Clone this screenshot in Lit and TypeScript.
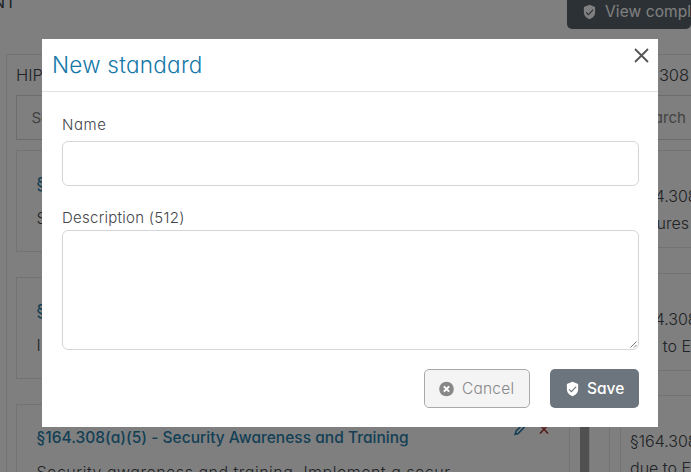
import { LitElement, html, css, svg } from "lit";
import { customElement, property } from "lit/decorators.js";

const shield = svg`<path d="M8 .3 14 2.700v5.600c0 3.600-2.600 6.200-6 7.400-3.400-1.200-6-3.800-6-7.400V2.700z" fill="currentColor"/><path class="tick" d="M4.300 8.300 6.900 10.800 11.900 5.400" fill="none"/>`;

@customElement("standard-card")
class StandardCard extends LitElement {
  @property() heading = "";
  @property({ type: Array }) lines: string[] = [];
  @property({ type: Boolean }) actions = false;

  static styles = css`
    :host { display: block; box-sizing: border-box; border: 1px solid #e6e6e6; padding: 17px 10px 0 19.500px; white-space: nowrap; overflow: hidden; }
    :host([plain]) { padding: 32px 0 0 9px; }
    .top { display: flex; justify-content: space-between; height: 31px; line-height: 31px; }
    .heading { font-weight: 500; font-size: 15.5px; color: #287fab; letter-spacing: 0.02px; }
    .icons { display: flex; gap: 12px; margin-right: 9px; }
    .icons svg { width: 12px; height: 14px; }
    .line { line-height: 27px; height: 27.300px; font-weight: 300; font-size: 16px; letter-spacing: 0.5px; }
    :host(:not([plain])) .line { margin-top: 6px; }
    :host([plain]) .line { letter-spacing: 0; }
  `;

  render() {
    return html`
      ${this.heading
        ? html`<div class="top">
            <span class="heading">${this.heading}</span>
            ${this.actions
              ? html`<span class="icons">
                  <svg viewBox="0 0 12 14"><path d="M1.200 12.300 2 9.200 8.800 2.300 11 4.400 4.200 11.500z" fill="none" stroke="#287fab" stroke-width="1.600"/></svg>
                  <svg viewBox="0 0 12 14"><path d="M2 3 10 11.500M10 3 2 11.500" stroke="#a83232" stroke-width="1.500"/></svg>
                </span>`
              : ""}
          </div>`
        : ""}
      ${this.lines.map((l) => html`<div class="line">${l}</div>`)}
    `;
  }
}

@customElement("app-root")
class AppRoot extends LitElement {
  static styles = css`
    * { box-sizing: border-box; }
    :host { display: block; position: relative; width: 691px; height: 472px; overflow: hidden; background: #fff; color: #42464b; font-family: Inter, "Open Sans", sans-serif; font-feature-settings: "cv11"; }
    .page { height: 472px; overflow: hidden; display: flex; flex-direction: column; white-space: nowrap; }
    .bar { height: 54px; flex: none; display: flex; justify-content: space-between; overflow: hidden; }
    .tenant { font-size: 16px; line-height: 20px; margin: -8px 0 0 -7px; letter-spacing: .5px; }
    .view { width: 124px; height: 34px; margin-top: -5px; padding: 0 0 1px 15px; border-radius: 5px; background: #57626b; color: #fff; display: flex; align-items: center; gap: 8px; font-size: 15.5px; letter-spacing: .1px; flex: none; }
    .icon { width: 15px; height: 16px; flex: none; }
    .tick { stroke: #57626b; stroke-width: 1.200; }
    .columns { display: flex; flex: 1; padding-left: 6px; }
    .column { flex: none; border: 1px solid #e6e6e6; border-bottom: 0; padding: 0 9px; display: flex; flex-direction: column; height: 418px; }
    .left { width: 584px; margin-right: 19px; }
    .right { width: 584px; padding-left: 10px; }
    .name { height: 40px; flex: none; line-height: 40px; font-size: 16.500px; font-weight: 350; }
    .right .name { letter-spacing: -.1px; }
    .search { height: 45px; flex: none; border: 1px solid #d9d9d9; padding-left: 14.500px; line-height: 43px; font-size: 15px; color: #858585; }
    .list { flex: 1; margin-top: 10px; display: flex; min-height: 0; overflow: hidden; }
    .cards { width: 554px; flex: none; display: flex; flex-direction: column; gap: 25px; }
    .cards standard-card { height: 102px; flex: none; }
    .right .cards { gap: 24.500px; }
    .right .cards standard-card { height: 98px; }
    .thumb { width: 9px; margin: 220px 0 0 10px; background: #a0a0a0; flex: none; }
    .left .list { margin-right: -10px; }
    .backdrop { position: absolute; inset: 0; background: rgba(0, 0, 0, .5); display: flex; padding: 38.500px 32.700px 45px 42.300px; }
    .dialog { flex: 1; background: #fff; display: flex; flex-direction: column; }
    .head { height: 53.500px; flex: none; border-bottom: 1px solid #dfe1e3; display: flex; justify-content: space-between; padding: 0 9.500px 0 9.700px; }
    .title { font-size: 22.500px; line-height: 51px; font-weight: 300; color: #1478a8; letter-spacing: .25px; }
    .close { width: 15px; height: 15px; margin-top: 9.500px; }
    .form { padding: 0 19.300px 0 19.700px; display: flex; flex-direction: column; }
    .label { font-size: 15px; line-height: 20px; height: 20px; letter-spacing: .27px; font-weight: 350; }
    .l1 { margin-top: 23px; letter-spacing: .6px; }
    .l2 { margin-top: 22px; }
    .input { height: 45px; margin-top: 6px; border: 1px solid #d4d7d9; border-radius: 6px; }
    .area { height: 120px; margin-top: 2px; border: 1px solid #d4d7d9; border-radius: 6px; display: flex; align-items: flex-end; justify-content: flex-end; }
    .grip { width: 8px; height: 8px; }
    .actions { display: flex; justify-content: flex-end; gap: 20px; margin-top: 19px; }
    .btn { height: 39px; border-radius: 5px; display: flex; align-items: center; font-size: 15.500px; }
    .cancel { width: 106px; border: 1px solid #a9a9a9; background: #f4f4f4; color: #888; padding-left: 14px; gap: 8px; letter-spacing: .2px; font-weight: 350; }
    .save { width: 89px; background: #6c757d; color: #fff; padding-left: 15px; gap: 7px; font-weight: 450; }
    .save .tick { stroke: #6c757d; }
  `;

  render() {
    return html`
      <div class="page">
        <div class="bar">
          <div class="tenant">NT</div>
          <div class="view"><svg class="icon" viewBox="0 0 16 16">${shield}</svg><span>View compl</span></div>
        </div>
        <div class="columns">
          <div class="column left">
            <div class="name">HIPAA</div>
            <div class="search">Search</div>
            <div class="list">
              <div class="cards">
                <standard-card heading="§164" .lines=${["Security"]}></standard-card>
                <standard-card heading="§164" .lines=${["Implement"]}></standard-card>
                <standard-card actions heading="§164.308(a)(5) - Security Awareness and Training" .lines=${["Security awareness and training. Implement a secur"]}></standard-card>
              </div>
              <div class="thumb"></div>
            </div>
          </div>
          <div class="column right">
            <div class="name">§164.308</div>
            <div class="search">Search</div>
            <div class="list">
              <div class="cards">
                <standard-card plain .lines=${["§164.308", "secures"]}></standard-card>
                <standard-card plain .lines=${["§164.308", "due to E"]}></standard-card>
                <standard-card plain .lines=${["§164.308", "due to E"]}></standard-card>
              </div>
            </div>
          </div>
        </div>
      </div>
      <div class="backdrop">
        <div class="dialog">
          <div class="head">
            <span class="title">New standard</span>
            <svg class="close" viewBox="0 0 15 15"><path d="M1 1 14 14M14 1 1 14" stroke="#555" stroke-width="1.800"/></svg>
          </div>
          <div class="form">
            <div class="label l1">Name</div>
            <div class="input"></div>
            <div class="label l2">Description (512)</div>
            <div class="area"><svg class="grip" viewBox="0 0 8 8"><path d="M.5 6.500 6.500.5M4 6.500 6.500 4" stroke="#666" stroke-width=".9"/></svg></div>
            <div class="actions">
              <div class="btn cancel">
                <svg class="icon" viewBox="0 0 16 16"><circle cx="8" cy="8" r="7.800" fill="#888"/><path d="M5.200 5.200 10.800 10.800M10.800 5.200 5.200 10.800" stroke="#fff" stroke-width="2.200"/></svg>
                <span>Cancel</span>
              </div>
              <div class="btn save"><svg class="icon" viewBox="0 0 16 16">${shield}</svg><span>Save</span></div>
            </div>
          </div>
        </div>
      </div>
    `;
  }
}
